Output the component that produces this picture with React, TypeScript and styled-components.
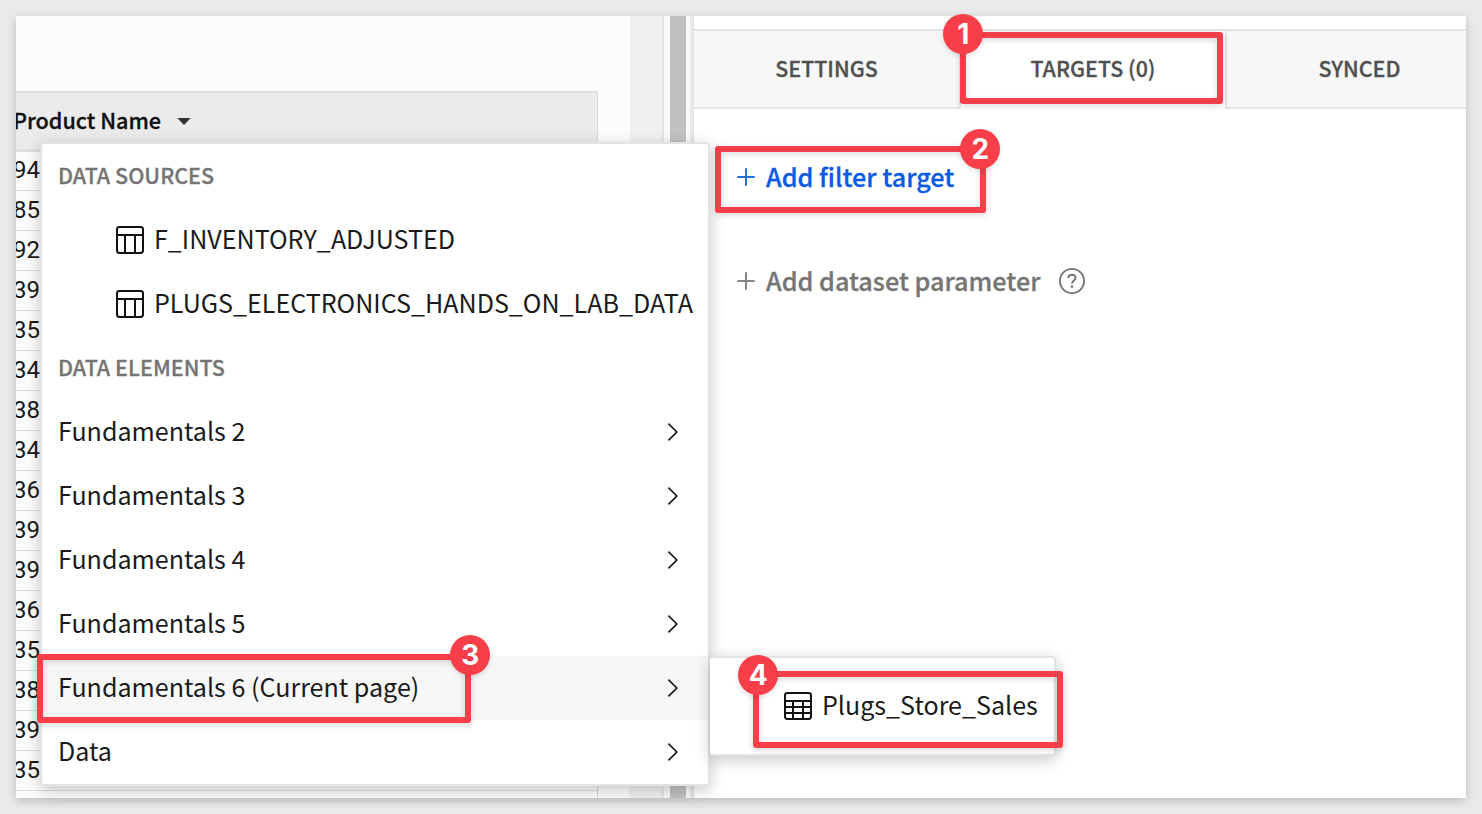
import React from 'react';
import styled, { createGlobalStyle, css } from 'styled-components';

const GlobalStyle = createGlobalStyle`
  *, *::before, *::after { box-sizing: border-box; }
  html, body { margin: 0; padding: 0; }
  body {
    background: #eaeaea;
    color: #1a1a1a;
    font-family: "Noto Sans CJK SC", "Open Sans", sans-serif;
    overflow: hidden;
  }
`;

const semibold = css`
  font-weight: 500;
  -webkit-text-stroke: 0.3px currentColor;
`;

const Page = styled.div`
  position: relative;
  width: 1482px;
  height: 814px;
  padding: 16px;
  overflow: hidden;
`;

const Frame = styled.div`
  display: flex;
  width: 1450px;
  height: 782px;
  background: #fff;
  overflow: hidden;
  box-shadow: 0 3px 9px rgba(0, 0, 0, 0.2);
`;

const Canvas = styled.div`
  flex: none;
  width: 614px;
  height: 100%;
  padding-top: 75px;
  background: #fcfcfc;
`;

const Table = styled.div`
  width: 582px;
  height: 707px;
  border-top: 2px solid #dedede;
  border-right: 1px solid #d8d8d8;
`;

const TableHead = styled.div`
  display: flex;
  align-items: center;
  gap: 16px;
  height: 59px;
  background: #ebebeb;
  border-bottom: 3px solid #e0e0e0;
`;

const ColumnTitle = styled.span`
  margin-left: -3px;
  padding-bottom: 2px;
  font-size: 21.6px;
  ${semibold}
  line-height: 30px;
  color: #111;
  white-space: nowrap;
`;

const Cell = styled.div`
  height: 40px;
  margin-left: -3px;
  border-bottom: 1px solid #dcdcdc;
  font-family: Roboto, sans-serif;
  font-size: 24px;
  line-height: 38px;

  &:nth-child(2) {
    height: 39px;
    line-height: 37px;
  }
`;

const Gutter = styled.div`
  flex: none;
  width: 34px;
  background: #f0f0f0;
  border-right: 2px solid #e5e5e5;
`;

const ScrollTrack = styled.div`
  flex: none;
  width: 30px;
  padding-left: 6px;
  background: #fafafa;
  border-right: 2px solid #e5e5e5;
  box-shadow: inset -2px 0 0 #ebebeb;
`;

const ScrollThumb = styled.div`
  width: 16px;
  height: 100%;
  background: #c1c1c1;
`;

const Panel = styled.div`
  flex: 1;
  min-width: 0;
  padding-top: 13px;
  overflow: hidden;
`;

const Tabs = styled.div`
  display: flex;
  height: 80px;
  border-top: 2px solid #e5e5e5;
`;

const Tab = styled.div<{ $active?: boolean; $edge?: 'left' | 'right' }>`
  flex: none;
  display: flex;
  align-items: center;
  justify-content: center;
  width: 267px;
  height: 78px;
  padding-bottom: 3px;
  font-size: 21.45px;
  ${semibold}
  line-height: 30px;
  color: #505050;
  background: #f7f7f7;
  border-bottom: 2px solid #e5e5e5;
  ${p => p.$active && css`width: 264px; background: #fff; border-color: transparent;`}
  ${p => p.$edge === 'left' && css`border-left: 2px solid #e5e5e5;`}
  ${p => p.$edge === 'right' && css`border-right: 2px solid #e5e5e5; border-bottom-right-radius: 3px;`}
`;

const Actions = styled.div`
  display: flex;
  flex-direction: column;
  gap: 64px;
  padding: 48px 0 0 43px;
`;

const Action = styled.div<{ $primary?: boolean }>`
  display: flex;
  align-items: center;
  height: 40px;
  font-size: 25.2px;
  ${semibold}
  line-height: 38px;
  white-space: nowrap;
  color: ${p => (p.$primary ? '#0a5ae6' : '#757575')};
`;

const ActionLabel = styled.span`
  margin: 0 18px 0 11px;
  padding-bottom: 2px;
`;

const Popup = styled.div`
  position: absolute;
  background: #fff;
  border: 2px solid #e3e3e3;
  border-radius: 4px;
  box-shadow: 0 4px 16px rgba(0, 0, 0, 0.22);
`;

const Menu = styled(Popup)`
  left: 40px;
  top: 142px;
  width: 670px;
  height: 644px;
`;

const Submenu = styled(Popup)`
  left: 710px;
  top: 656px;
  width: 346px;
  height: 100px;
  padding: 16px 0;
  border-left: 0;
`;

const MenuHeading = styled.div`
  display: flex;
  align-items: center;
  height: 64px;
  padding: 0 0 3px 16px;
  font-size: 21.5px;
  ${semibold}
  color: #757575;
`;

const MenuItem = styled.div<{ $active?: boolean; $indent?: number }>`
  display: flex;
  align-items: center;
  justify-content: space-between;
  height: 64px;
  padding: 0 29px 0 ${p => p.$indent ?? 16}px;
  font-size: 25.08px;
  white-space: nowrap;
  background: ${p => (p.$active ? '#f7f7f7' : 'transparent')};
`;

const Source = styled(MenuItem)`
  justify-content: flex-start;
  gap: 10px;
  padding-right: 0;
`;

const ItemLabel = styled.span`
  padding-bottom: 5px;
`;

const Callout = styled.div<{ $x: number; $y: number; $w: number; $h: number }>`
  position: absolute;
  left: ${p => p.$x}px;
  top: ${p => p.$y}px;
  width: ${p => p.$w}px;
  height: ${p => p.$h}px;
  border: 6px solid #f83e49;
  border-radius: 3px;
  filter: drop-shadow(0 2px 3px rgba(0, 0, 0, 0.16));
`;

const Badge = styled.div<{ $x: number; $y: number }>`
  position: absolute;
  left: ${p => p.$x - 20}px;
  top: ${p => p.$y - 20}px;
  width: 40px;
  height: 40px;
  border-radius: 50%;
  background: #f83e49;
  color: #fff;
  font: 700 28px/40px Inter, sans-serif;
  text-align: center;
  box-shadow: 0 2px 5px rgba(0, 0, 0, 0.12);
`;

const Icon = styled.svg`
  flex: none;
  display: block;
`;

const Plus = () => (
  <Icon width="18" height="18" viewBox="0 0 18 18" stroke="currentColor" strokeWidth="2" opacity="0.88">
    <path d="M9 0.3V17.7M0.3 9H17.7" />
  </Icon>
);

const Help = () => (
  <Icon width="28" height="28" viewBox="0 0 28 28" fill="none" stroke="currentColor" strokeWidth="1.9">
    <circle cx="14" cy="14" r="12.1" />
    <path d="M10.4 11C10.5 8.9 12 7.8 14 7.8C16.1 7.8 17.5 9 17.5 10.9C17.5 13.4 14 13.8 14 16.6" />
    <path d="M14 18.4V20.8" strokeWidth="2.4" />
  </Icon>
);

const Chevron = () => (
  <Icon width="12" height="20" viewBox="0 0 12 20" fill="none" stroke="#1a1a1a" strokeWidth="1.7">
    <path d="M1.4 1.6L9.8 10L1.4 18.4" />
  </Icon>
);

const TableIcon = ({ rows }: { rows?: boolean }) => (
  <Icon width="28" height="28" viewBox="0 0 28 28" fill="none" stroke="#111" strokeWidth="2">
    <rect x="1" y="1" width="26" height="26" rx="2.4" />
    <path d={rows ? 'M1 9H27M1 15H27M1 21H27M9 9V27M19 9V27' : 'M1 9H27M9 9V27M19 9V27'} />
  </Icon>
);

const Caret = () => (
  <Icon width="14" height="8" viewBox="0 0 14 8">
    <path d="M0.3 1.1H13.7L7 7.9Z" fill="#333" />
  </Icon>
);

const values = ['94', '85', '92', '39', '35', '34', '38', '34', '36', '39', '39', '36', '35', '38', '39', '35'];
const sources = ['F_INVENTORY_ADJUSTED', 'PLUGS_ELECTRONICS_HANDS_ON_LAB_DATA'];
const elements = ['Fundamentals 2', 'Fundamentals 3', 'Fundamentals 4', 'Fundamentals 5', 'Fundamentals 6 (Current page)', 'Data'];

export default function App() {
  return (
    <Page>
      <GlobalStyle />
      <Frame>
        <Canvas>
          <Table>
            <TableHead>
              <ColumnTitle>Product Name</ColumnTitle>
              <Caret />
            </TableHead>
            {values.map((v, i) => <Cell key={i}>{v}</Cell>)}
          </Table>
        </Canvas>
        <Gutter />
        <ScrollTrack><ScrollThumb /></ScrollTrack>
        <Panel>
          <Tabs>
            <Tab $edge="right">SETTINGS</Tab>
            <Tab $active>TARGETS (0)</Tab>
            <Tab $edge="left">SYNCED</Tab>
          </Tabs>
          <Actions>
            <Action $primary><Plus /><ActionLabel>Add filter target</ActionLabel></Action>
            <Action><Plus /><ActionLabel>Add dataset parameter</ActionLabel><Help /></Action>
          </Actions>
        </Panel>
      </Frame>

      <Menu>
        <MenuHeading>DATA SOURCES</MenuHeading>
        {sources.map(s => <Source key={s} $indent={74}><TableIcon /><ItemLabel>{s}</ItemLabel></Source>)}
        <MenuHeading>DATA ELEMENTS</MenuHeading>
        {elements.map((e, i) => (
          <MenuItem key={e} $active={i === 4}><ItemLabel>{e}</ItemLabel><Chevron /></MenuItem>
        ))}
      </Menu>
      <Submenu>
        <Source $indent={74}><TableIcon rows /><ItemLabel>Plugs_Store_Sales</ItemLabel></Source>
      </Submenu>

      <Callout $x={959.5} $y={32} $w={263.9} $h={72} />
      <Badge $x={963.3} $y={34}>1</Badge>
      <Callout $x={714.5} $y={145.5} $w={271.5} $h={67} />
      <Badge $x={980.3} $y={149}>2</Badge>
      <Callout $x={36.5} $y={654} $w={434.5} $h={69} />
      <Badge $x={470.3} $y={655.3}>3</Badge>
      <Callout $x={753.3} $y={671} $w={309.5} $h={77.4} />
      <Badge $x={758.3} $y={675}>4</Badge>
    </Page>
  );
}
